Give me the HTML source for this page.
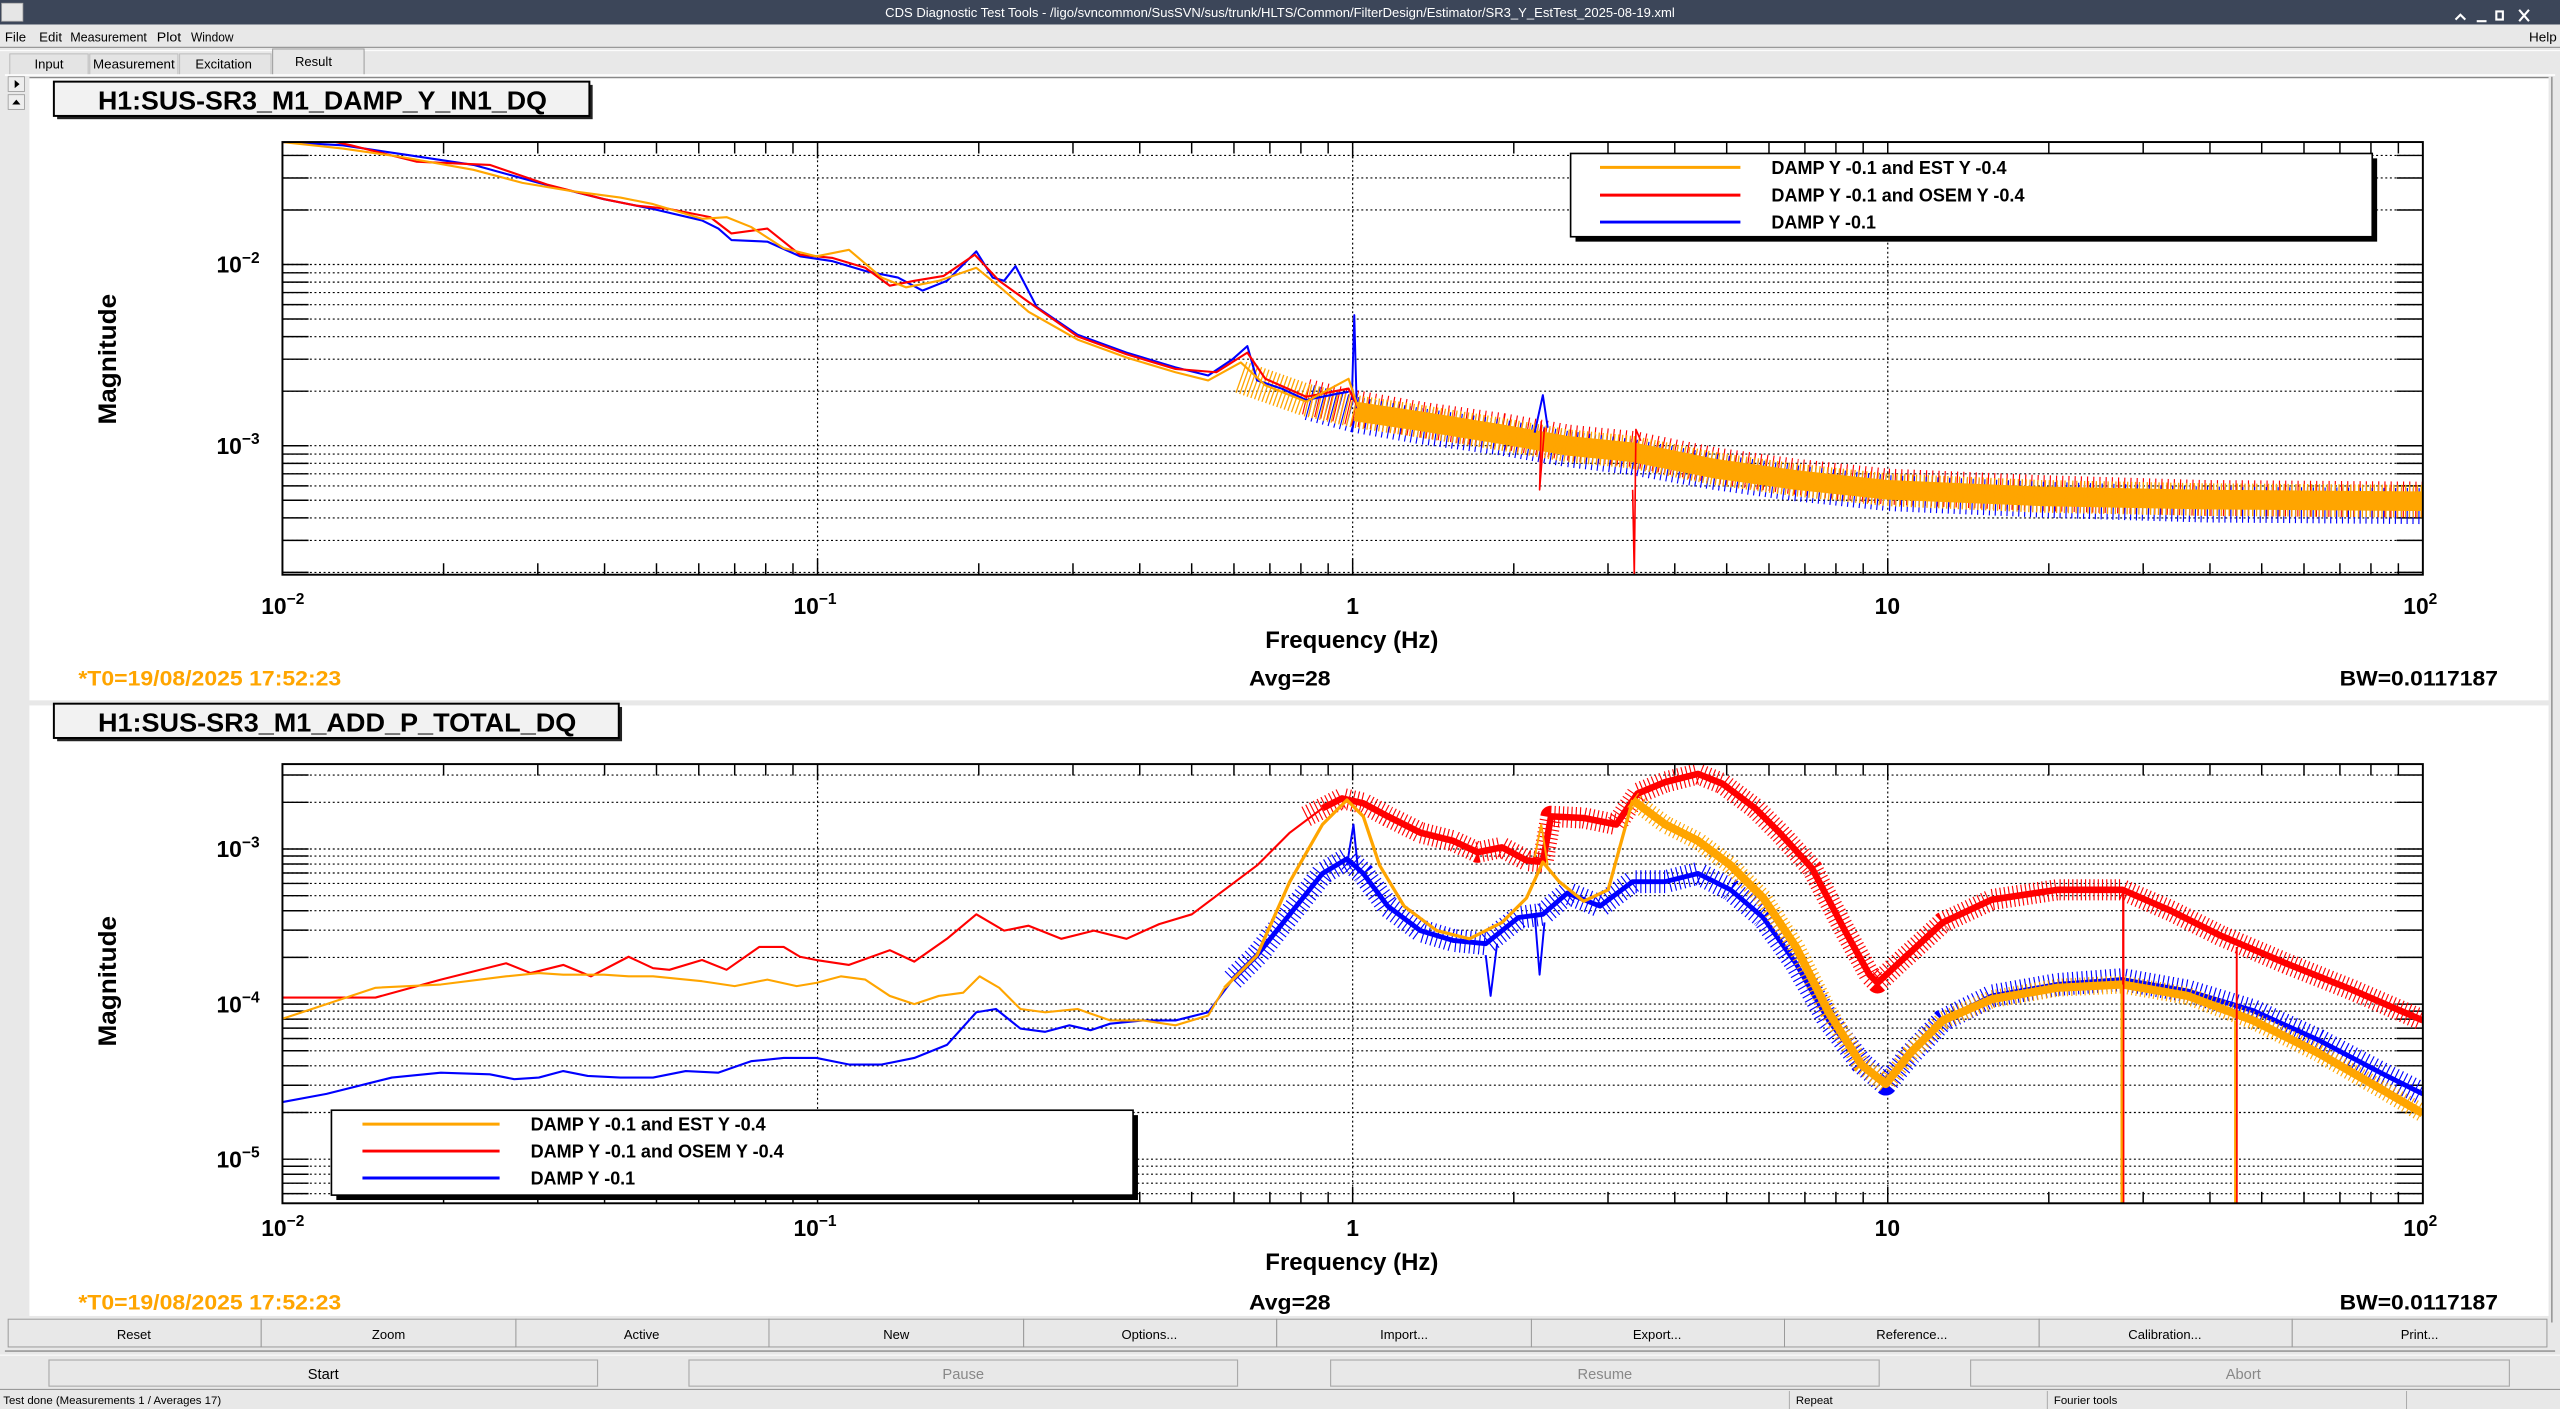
<!DOCTYPE html>
<html><head><meta charset="utf-8"><style>
html,body{margin:0;padding:0;background:#e8e8e8;overflow:hidden}
svg{display:block}
text{font-family:"Liberation Sans",sans-serif}
</style></head><body>
<svg width="2560" height="1409" viewBox="0 0 1568 863" preserveAspectRatio="none" xmlns="http://www.w3.org/2000/svg">
<defs>
<clipPath id="c1"><rect x="173" y="87" width="1311" height="265"/></clipPath>
<clipPath id="c2"><rect x="173" y="468" width="1311" height="269"/></clipPath>
</defs>
<rect width="1568" height="863" fill="#e8e8e8"/>
<rect x="0" y="0" width="1568" height="15" fill="#3c4659"/>
<rect x="1" y="2" width="13" height="11" fill="#e6e6e6" stroke="#aaa" stroke-width="0.5"/>
<text x="784" y="10.5" font-size="8" fill="#fff" text-anchor="middle">CDS Diagnostic Test Tools - /ligo/svncommon/SusSVN/sus/trunk/HLTS/Common/FilterDesign/Estimator/SR3_Y_EstTest_2025-08-19.xml</text>
<path d="M1504,12 l3,-3 l3,3 M1517,13 h6 M1529,7 h4 v5 h-4 z M1543,6 l6,7 M1549,6 l-6,7" stroke="#fff" stroke-width="1.3" fill="none"/>
<rect x="0" y="15" width="1568" height="14" fill="#e8e8e8"/>
<line x1="0" y1="29" x2="1568" y2="29" stroke="#999" stroke-width="0.8"/>
<g font-size="8" fill="#000">
<text x="3" y="25.5" textLength="13" lengthAdjust="spacingAndGlyphs">File</text><text x="24" y="25.5" textLength="14" lengthAdjust="spacingAndGlyphs">Edit</text><text x="43" y="25.5" textLength="47" lengthAdjust="spacingAndGlyphs">Measurement</text><text x="96" y="25.5" textLength="15" lengthAdjust="spacingAndGlyphs">Plot</text><text x="117" y="25.5" textLength="26" lengthAdjust="spacingAndGlyphs">Window</text><text x="1549" y="25.5" textLength="17" lengthAdjust="spacingAndGlyphs">Help</text>
</g>
<line x1="0" y1="31" x2="1568" y2="31" stroke="#fff" stroke-width="0.6"/>
<g font-size="8" fill="#000" text-anchor="middle">
<rect x="6" y="33" width="48" height="13" fill="#e4e4e4" stroke="#bbb" stroke-width="0.6"/><text x="30" y="42">Input</text>
<rect x="55" y="33" width="54" height="13" fill="#e4e4e4" stroke="#bbb" stroke-width="0.6"/><text x="82" y="42" textLength="50" lengthAdjust="spacingAndGlyphs">Measurement</text>
<rect x="110" y="33" width="56" height="13" fill="#e4e4e4" stroke="#bbb" stroke-width="0.6"/><text x="137" y="42">Excitation</text>
<rect x="167" y="30" width="56" height="16" fill="#e8e8e8" stroke="#999" stroke-width="0.6"/><text x="192" y="40.5">Result</text>
</g>
<line x1="3" y1="46" x2="1565" y2="46" stroke="#fff" stroke-width="1"/>
<rect x="5" y="47" width="10" height="9" fill="#eee" stroke="#999" stroke-width="0.5"/><path d="M9,49 l3,2.5 l-3,2.5z" fill="#000"/>
<rect x="5" y="58" width="10" height="9" fill="#eee" stroke="#999" stroke-width="0.5"/><path d="M7.5,64 h5 l-2.5,-3z" fill="#000"/>
<rect x="18" y="47" width="1543" height="382" fill="#fff"/>
<rect x="18" y="432" width="1543" height="374" fill="#fff"/>
<line x1="18" y1="47.5" x2="1561" y2="47.5" stroke="#888" stroke-width="0.8"/>
<line x1="1563" y1="47" x2="1563" y2="810" stroke="#999" stroke-width="1"/>
<rect x="18" y="429" width="1543" height="3" fill="#e8e8e8"/>

<!-- ============ PLOT 1 ============ -->
<rect x="35" y="52" width="328" height="21" fill="#222"/>
<rect x="33" y="50" width="328" height="21" fill="#f2f2f2" stroke="#000" stroke-width="1.2"/>
<text x="60" y="67" font-size="16" font-weight="bold" textLength="275" lengthAdjust="spacingAndGlyphs">H1:SUS-SR3_M1_DAMP_Y_IN1_DQ</text>
<g stroke="#000" stroke-width="0.7" stroke-dasharray="1.2,1.6">
<path d="M173,95.2H1484M173,109H1484M173,128.6H1484M173,162H1484M173,167.1H1484M173,172.8H1484M173,179.2H1484M173,186.6H1484M173,195.4H1484M173,206.2H1484M173,220H1484M173,239.6H1484M173,273H1484M173,278.1H1484M173,283.8H1484M173,290.2H1484M173,297.6H1484M173,306.4H1484M173,317.2H1484M173,331H1484M173,350.6H1484M500.75,87V352M828.5,87V352M1156.25,87V352"/>
</g>
<g stroke="#000" stroke-width="0.9">
<path d="M173,95.2h16M173,109h16M173,128.6h16M173,162h16M173,167.1h16M173,172.8h16M173,179.2h16M173,186.6h16M173,195.4h16M173,206.2h16M173,220h16M173,239.6h16M173,273h16M173,278.1h16M173,283.8h16M173,290.2h16M173,297.6h16M173,306.4h16M173,317.2h16M173,331h16M173,350.6h16"/>
<path d="M1484,95.2h-16M1484,109h-16M1484,128.6h-16M1484,162h-16M1484,167.1h-16M1484,172.8h-16M1484,179.2h-16M1484,186.6h-16M1484,195.4h-16M1484,206.2h-16M1484,220h-16M1484,239.6h-16M1484,273h-16M1484,278.1h-16M1484,283.8h-16M1484,290.2h-16M1484,297.6h-16M1484,306.4h-16M1484,317.2h-16M1484,331h-16M1484,350.6h-16"/>
<path d="M271.7,87v7M329.4,87v7M370.3,87v7M402.1,87v7M428,87v7M450,87v7M469,87v7M485.7,87v7M500.75,87v10M599.5,87v7M657.2,87v7M698.1,87v7M729.9,87v7M755.8,87v7M777.8,87v7M796.8,87v7M813.5,87v7M828.5,87v10M927.2,87v7M984.9,87v7M1025.8,87v7M1057.6,87v7M1083.5,87v7M1105.5,87v7M1124.5,87v7M1141.2,87v7M1156.25,87v10M1254.9,87v7M1312.7,87v7M1353.6,87v7M1385.3,87v7M1411.2,87v7M1433.2,87v7M1452.2,87v7M1469,87v7"/>
<path d="M271.7,352v-7M329.4,352v-7M370.3,352v-7M402.1,352v-7M428,352v-7M450,352v-7M469,352v-7M485.7,352v-7M500.75,352v-10M599.5,352v-7M657.2,352v-7M698.1,352v-7M729.9,352v-7M755.8,352v-7M777.8,352v-7M796.8,352v-7M813.5,352v-7M828.5,352v-10M927.2,352v-7M984.9,352v-7M1025.8,352v-7M1057.6,352v-7M1083.5,352v-7M1105.5,352v-7M1124.5,352v-7M1141.2,352v-7M1156.25,352v-10M1254.9,352v-7M1312.7,352v-7M1353.6,352v-7M1385.3,352v-7M1411.2,352v-7M1433.2,352v-7M1452.2,352v-7M1469,352v-7"/>
</g>
<g clip-path="url(#c1)" fill="none" stroke-linejoin="round">
<polyline stroke="#f00" stroke-width="22" stroke-dasharray="0.7,3.1" points="800,243 830,250 870,257 920,264 960,271 1000,275 1050,285 1100,292 1156,298 1250,302 1350,305 1484,306"/>
<polyline stroke="#00f" stroke-width="22" stroke-dasharray="0.7,2.9" stroke-dashoffset="1.5" points="800,246 830,254 870,261 920,268 960,275 1000,280 1050,289 1100,296 1156,302 1250,306 1350,309 1484,310"/>
<polyline stroke="#ffa500" stroke-width="12" points="830,252 870,258 920,266 960,273 1000,277 1050,287 1100,294 1156,300 1250,304 1350,306 1484,307"/>
<polyline stroke="#ffa500" stroke-width="20" stroke-dasharray="0.8,1.6" points="760,231 800,245 830,252 870,258 920,266 960,273 1000,277 1050,287 1100,294 1156,300 1250,304 1350,306 1484,307"/>
<polyline stroke="#f00" stroke-width="1" points="946,262 943,300 944,258"/>
<polyline stroke="#f00" stroke-width="1" points="1000,300 1001,352 1002,263 1005,270"/>
<polyline stroke="#00f" stroke-width="1.2" points="940,265 945,242 948,262"/>
<polyline stroke="#00f" stroke-width="1.2" points="828,245 829.5,193 831,250"/>
<polyline stroke="#00f" stroke-width="1.3" points="173,87 210,89 250,95 290,101 330,112 370,122 400,128 430,135 440,140 448,147 470,148 490,157 510,160 530,166 550,170 565,178 580,172 598,154 608,170 615,172 622,163 635,188 660,205 690,216 720,225 740,230 755,220 764,212 770,233 785,238 800,245 820,241 826,240"/>
<polyline stroke="#f00" stroke-width="1.3" points="173,80 215,89 255,99 300,101 335,113 370,122 390,126 410,128 435,133 448,143 470,140 490,156 510,158 530,164 545,175 560,172 578,169 597,156 612,172 630,185 660,206 690,217 720,226 745,228 764,216 775,232 800,243 826,238 832,250"/>
<polyline stroke="#ffa500" stroke-width="1.3" points="173,87 210,91 245,96 290,104 320,112 350,117 380,121 400,125 430,134 445,133 460,139 480,152 500,157 520,153 540,170 555,176 575,172 598,164 615,178 630,191 660,208 690,219 720,228 740,233 760,222 775,236 800,246 826,232 832,250"/>
</g>
<rect x="173" y="87" width="1311" height="265" fill="none" stroke="#000" stroke-width="1.2"/>
<rect x="965" y="97" width="491" height="51" fill="#000"/>
<rect x="962" y="94" width="491" height="51" fill="#fff" stroke="#000" stroke-width="1"/>
<line x1="980" y1="102.5" x2="1066" y2="102.5" stroke="#ffa500" stroke-width="1.8"/>
<line x1="980" y1="119.5" x2="1066" y2="119.5" stroke="#f00" stroke-width="1.8"/>
<line x1="980" y1="136" x2="1066" y2="136" stroke="#00f" stroke-width="1.8"/>
<g font-size="11.5" font-weight="bold">
<text x="1085" y="106.5" textLength="144" lengthAdjust="spacingAndGlyphs">DAMP Y -0.1 and EST Y -0.4</text>
<text x="1085" y="123.5" textLength="155" lengthAdjust="spacingAndGlyphs">DAMP Y -0.1 and OSEM Y -0.4</text>
<text x="1085" y="140" textLength="64" lengthAdjust="spacingAndGlyphs">DAMP Y -0.1</text>
</g>
<g font-weight="bold" font-size="14">
<text x="159" y="167" text-anchor="end">10<tspan font-size="9.5" dy="-6">−2</tspan></text>
<text x="159" y="278" text-anchor="end">10<tspan font-size="9.5" dy="-6">−3</tspan></text>
<text x="160" y="376">10<tspan font-size="9.5" dy="-6">−2</tspan></text>
<text x="486" y="376">10<tspan font-size="9.5" dy="-6">−1</tspan></text>
<text x="828.5" y="376" text-anchor="middle">1</text>
<text x="1156" y="376" text-anchor="middle">10</text>
<text x="1472" y="376">10<tspan font-size="9.5" dy="-6">2</tspan></text>
</g>
<text x="775" y="397" font-size="14.5" font-weight="bold" textLength="106" lengthAdjust="spacingAndGlyphs">Frequency (Hz)</text>
<text transform="translate(71,260) rotate(-90)" font-size="15.5" font-weight="bold" textLength="80" lengthAdjust="spacingAndGlyphs">Magnitude</text>
<text x="48" y="420" font-size="13" font-weight="bold" fill="#ffa500" textLength="161" lengthAdjust="spacingAndGlyphs">*T0=19/08/2025 17:52:23</text>
<text x="765" y="420" font-size="13" font-weight="bold" textLength="50" lengthAdjust="spacingAndGlyphs">Avg=28</text>
<text x="1433" y="420" font-size="13" font-weight="bold" textLength="97" lengthAdjust="spacingAndGlyphs">BW=0.0117187</text>

<!-- ============ PLOT 2 ============ -->
<rect x="35" y="433" width="346" height="21" fill="#222"/>
<rect x="33" y="431" width="346" height="21" fill="#f2f2f2" stroke="#000" stroke-width="1.2"/>
<text x="60" y="448" font-size="16" font-weight="bold" textLength="293" lengthAdjust="spacingAndGlyphs">H1:SUS-SR3_M1_ADD_P_TOTAL_DQ</text>
<g stroke="#000" stroke-width="0.7" stroke-dasharray="1.2,1.6">
<path d="M173,474.7H1484M173,491.4H1484M173,520H1484M173,524.3H1484M173,529.2H1484M173,534.7H1484M173,541.1H1484M173,548.6H1484M173,557.8H1484M173,569.7H1484M173,586.4H1484M173,615H1484M173,619.3H1484M173,624.2H1484M173,629.7H1484M173,636.1H1484M173,643.6H1484M173,652.8H1484M173,664.7H1484M173,681.4H1484M173,710H1484M173,714.3H1484M173,719.2H1484M173,724.7H1484M173,731.1H1484M500.75,468V737M828.5,468V737M1156.25,468V737"/>
</g>
<g stroke="#000" stroke-width="0.9">
<path d="M173,474.7h16M173,491.4h16M173,520h16M173,524.3h16M173,529.2h16M173,534.7h16M173,541.1h16M173,548.6h16M173,557.8h16M173,569.7h16M173,586.4h16M173,615h16M173,619.3h16M173,624.2h16M173,629.7h16M173,636.1h16M173,643.6h16M173,652.8h16M173,664.7h16M173,681.4h16M173,710h16M173,714.3h16M173,719.2h16M173,724.7h16M173,731.1h16"/>
<path d="M1484,474.7h-16M1484,491.4h-16M1484,520h-16M1484,524.3h-16M1484,529.2h-16M1484,534.7h-16M1484,541.1h-16M1484,548.6h-16M1484,557.8h-16M1484,569.7h-16M1484,586.4h-16M1484,615h-16M1484,619.3h-16M1484,624.2h-16M1484,629.7h-16M1484,636.1h-16M1484,643.6h-16M1484,652.8h-16M1484,664.7h-16M1484,681.4h-16M1484,710h-16M1484,714.3h-16M1484,719.2h-16M1484,724.7h-16M1484,731.1h-16"/>
<path d="M271.7,468v7M329.4,468v7M370.3,468v7M402.1,468v7M428,468v7M450,468v7M469,468v7M485.7,468v7M500.75,468v10M599.5,468v7M657.2,468v7M698.1,468v7M729.9,468v7M755.8,468v7M777.8,468v7M796.8,468v7M813.5,468v7M828.5,468v10M927.2,468v7M984.9,468v7M1025.8,468v7M1057.6,468v7M1083.5,468v7M1105.5,468v7M1124.5,468v7M1141.2,468v7M1156.25,468v10M1254.9,468v7M1312.7,468v7M1353.6,468v7M1385.3,468v7M1411.2,468v7M1433.2,468v7M1452.2,468v7M1469,468v7"/>
<path d="M271.7,737v-7M329.4,737v-7M370.3,737v-7M402.1,737v-7M428,737v-7M450,737v-7M469,737v-7M485.7,737v-7M500.75,737v-10M599.5,737v-7M657.2,737v-7M698.1,737v-7M729.9,737v-7M755.8,737v-7M777.8,737v-7M796.8,737v-7M813.5,737v-7M828.5,737v-10M927.2,737v-7M984.9,737v-7M1025.8,737v-7M1057.6,737v-7M1083.5,737v-7M1105.5,737v-7M1124.5,737v-7M1141.2,737v-7M1156.25,737v-10M1254.9,737v-7M1312.7,737v-7M1353.6,737v-7M1385.3,737v-7M1411.2,737v-7M1433.2,737v-7M1452.2,737v-7M1469,737v-7"/>
</g>
<g clip-path="url(#c2)" fill="none" stroke-linejoin="round">
<polyline stroke="#f00" stroke-width="1.3" points="173,611 230,611 270,600 310,590 325,596 345,591 362,598 385,586 400,593 410,594 430,588 445,594 465,580 480,580 490,586 500,588 520,591 545,582 560,589 580,575 598,560 615,570 630,567 650,575 670,570 690,575 710,566 730,560 750,545 770,530 790,510 810,495"/>
<polyline stroke="#f00" stroke-width="4" points="810,495 822,489 835,492 850,500 870,510 890,515 905,522 920,519 935,527 945,528 950,500 970,501 990,505 1003,486 1020,479 1040,474 1055,480 1075,495 1090,510 1110,532 1130,570 1145,597 1150,602 1165,588 1190,565 1220,551 1260,545 1300,545 1330,558 1360,573 1400,590 1440,606 1484,625"/>
<polyline stroke="#f00" stroke-width="13" stroke-dasharray="0.7,1.9" points="800,500 822,489 835,492 850,500 870,510 890,515 905,522 920,519 935,527 945,528 950,500 970,501 990,505 1003,486 1020,479 1040,474 1055,480 1075,495 1090,510 1110,532 1130,570 1145,597 1150,602 1165,588 1190,565 1220,551 1260,545 1300,545 1330,558 1360,573 1400,590 1440,606 1484,625"/>
<polyline stroke="#00f" stroke-width="1.3" points="173,675 200,670 240,660 270,657 300,658 315,661 330,660 345,656 360,659 380,660 400,660 420,656 440,657 460,650 480,648 500,648 520,652 540,652 560,648 580,640 598,620 610,618 625,630 640,632 655,628 668,631 680,627 700,625 720,625 740,620 755,600"/>
<polyline stroke="#00f" stroke-width="3" points="755,600 770,585 790,560 810,535 825,526 835,535 850,555 870,570 890,576 910,578 930,562 945,560 960,547 980,555 1000,540 1020,540 1040,535 1060,545 1080,562 1100,590 1120,625 1140,651 1155,664 1170,646 1190,625 1220,610 1260,603 1300,600 1340,607 1380,619 1420,637 1460,658 1484,670"/>
<polyline stroke="#00f" stroke-width="14" stroke-dasharray="0.7,2.2" points="755,600 770,585 790,560 810,535 825,526 835,535 850,555 870,570 890,576 910,578 930,562 945,560 960,547 980,555 1000,540 1020,540 1040,535 1060,545 1080,562 1100,590 1120,625 1140,651 1155,664 1170,646 1190,625 1220,610 1260,603 1300,600 1340,607 1380,619 1420,637 1460,658 1484,670"/>
<polyline stroke="#00f" stroke-width="1.2" points="825,530 829,505 832,535"/>
<polyline stroke="#00f" stroke-width="1.2" points="910,585 913,610 917,578"/>
<polyline stroke="#00f" stroke-width="1.2" points="940,560 943,597 946,565"/>
<polyline stroke="#ffa500" stroke-width="1.3" points="173,624 200,615 230,605 270,603 310,598 330,596 345,597 370,597 385,598 400,598 430,601 450,604 470,600 488,604 500,602 515,598 530,600 545,610 560,615 575,610 590,608 600,598 612,605 625,618 640,620 660,618 680,625 700,625 720,628 740,622 750,605"/>
<polyline stroke="#ffa500" stroke-width="2" points="750,605 770,585 790,540 810,505 825,490 835,500 845,530 860,555 880,570 900,575 920,565 935,550 945,528 955,540 970,552 985,545 1000,490"/>
<polyline stroke="#ffa500" stroke-width="5" points="1000,490 1020,505 1040,515 1060,530 1080,550 1100,580 1120,620 1140,652 1155,664 1170,645 1190,625 1220,612 1260,605 1300,603 1340,610 1380,625 1420,645 1460,668 1484,682"/>
<polyline stroke="#ffa500" stroke-width="11" stroke-dasharray="0.7,2" points="1000,490 1020,505 1040,515 1060,530 1080,550 1100,580 1120,620 1140,652 1155,664 1170,645 1190,625 1220,612 1260,605 1300,603 1340,610 1380,625 1420,645 1460,668 1484,682"/>
<polyline stroke="#ffa500" stroke-width="1.2" points="940,525 944,505 948,530"/>
<line x1="1300.5" y1="545" x2="1300.5" y2="737" stroke="#f00" stroke-width="1.4"/>
<line x1="1299.5" y1="603" x2="1299.5" y2="737" stroke="#ffa500" stroke-width="1.4"/>
<line x1="1370" y1="580" x2="1370" y2="737" stroke="#f00" stroke-width="1.2"/>
<line x1="1369" y1="625" x2="1369" y2="737" stroke="#ffa500" stroke-width="1.2"/>
</g>
<rect x="173" y="468" width="1311" height="269" fill="none" stroke="#000" stroke-width="1.2"/>
<rect x="206" y="683" width="491" height="52" fill="#000"/>
<rect x="203" y="680" width="491" height="52" fill="#fff" stroke="#000" stroke-width="1"/>
<line x1="222" y1="688.5" x2="306" y2="688.5" stroke="#ffa500" stroke-width="1.8"/>
<line x1="222" y1="705" x2="306" y2="705" stroke="#f00" stroke-width="1.8"/>
<line x1="222" y1="721.5" x2="306" y2="721.5" stroke="#00f" stroke-width="1.8"/>
<g font-size="11.5" font-weight="bold">
<text x="325" y="692.5" textLength="144" lengthAdjust="spacingAndGlyphs">DAMP Y -0.1 and EST Y -0.4</text>
<text x="325" y="709" textLength="155" lengthAdjust="spacingAndGlyphs">DAMP Y -0.1 and OSEM Y -0.4</text>
<text x="325" y="725.5" textLength="64" lengthAdjust="spacingAndGlyphs">DAMP Y -0.1</text>
</g>
<g font-weight="bold" font-size="14">
<text x="159" y="525" text-anchor="end">10<tspan font-size="9.5" dy="-6">−3</tspan></text>
<text x="159" y="620" text-anchor="end">10<tspan font-size="9.5" dy="-6">−4</tspan></text>
<text x="159" y="715" text-anchor="end">10<tspan font-size="9.5" dy="-6">−5</tspan></text>
<text x="160" y="757">10<tspan font-size="9.5" dy="-6">−2</tspan></text>
<text x="486" y="757">10<tspan font-size="9.5" dy="-6">−1</tspan></text>
<text x="828.5" y="757" text-anchor="middle">1</text>
<text x="1156" y="757" text-anchor="middle">10</text>
<text x="1472" y="757">10<tspan font-size="9.5" dy="-6">2</tspan></text>
</g>
<text x="775" y="778" font-size="14.5" font-weight="bold" textLength="106" lengthAdjust="spacingAndGlyphs">Frequency (Hz)</text>
<text transform="translate(71,641) rotate(-90)" font-size="15.5" font-weight="bold" textLength="80" lengthAdjust="spacingAndGlyphs">Magnitude</text>
<text x="48" y="802" font-size="13" font-weight="bold" fill="#ffa500" textLength="161" lengthAdjust="spacingAndGlyphs">*T0=19/08/2025 17:52:23</text>
<text x="765" y="802" font-size="13" font-weight="bold" textLength="50" lengthAdjust="spacingAndGlyphs">Avg=28</text>
<text x="1433" y="802" font-size="13" font-weight="bold" textLength="97" lengthAdjust="spacingAndGlyphs">BW=0.0117187</text>

<g stroke="#999" stroke-width="0.6" fill="#e8e8e8">
<rect x="5" y="808" width="155" height="17"/><rect x="160" y="808" width="156" height="17"/><rect x="316" y="808" width="155" height="17"/><rect x="471" y="808" width="156" height="17"/><rect x="627" y="808" width="155" height="17"/><rect x="782" y="808" width="156" height="17"/><rect x="938" y="808" width="155" height="17"/><rect x="1093" y="808" width="156" height="17"/><rect x="1249" y="808" width="155" height="17"/><rect x="1404" y="808" width="156" height="17"/>
</g>
<g font-size="8" text-anchor="middle" fill="#000">
<text x="82" y="820">Reset</text><text x="238" y="820">Zoom</text><text x="393" y="820">Active</text><text x="549" y="820">New</text><text x="704" y="820">Options...</text><text x="860" y="820">Import...</text><text x="1015" y="820">Export...</text><text x="1171" y="820">Reference...</text><text x="1326" y="820">Calibration...</text><text x="1482" y="820">Print...</text>
</g>
<line x1="3" y1="827.5" x2="1565" y2="827.5" stroke="#999" stroke-width="1"/>
<line x1="0" y1="830" x2="1568" y2="830" stroke="#fff" stroke-width="0.6"/>
<g stroke="#aaa" stroke-width="0.7" fill="#e8e8e8">
<rect x="30" y="833" width="336" height="16"/><rect x="422" y="833" width="336" height="16"/><rect x="815" y="833" width="336" height="16"/><rect x="1207" y="833" width="330" height="16"/>
</g>
<g font-size="9" text-anchor="middle">
<text x="198" y="844.5" fill="#000">Start</text><text x="590" y="844.5" fill="#888">Pause</text><text x="983" y="844.5" fill="#888">Resume</text><text x="1374" y="844.5" fill="#888">Abort</text>
</g>
<line x1="0" y1="851" x2="1568" y2="851" stroke="#999" stroke-width="0.7"/>
<g stroke="#aaa" stroke-width="0.6" fill="none"><path d="M1096,852v11M1254,852v11M1474,852v11"/></g>
<g font-size="7" fill="#000">
<text x="2" y="860">Test done (Measurements 1 / Averages 17)</text>
<text x="1100" y="860">Repeat</text><text x="1258" y="860">Fourier tools</text>
</g>
</svg>
</body></html>
